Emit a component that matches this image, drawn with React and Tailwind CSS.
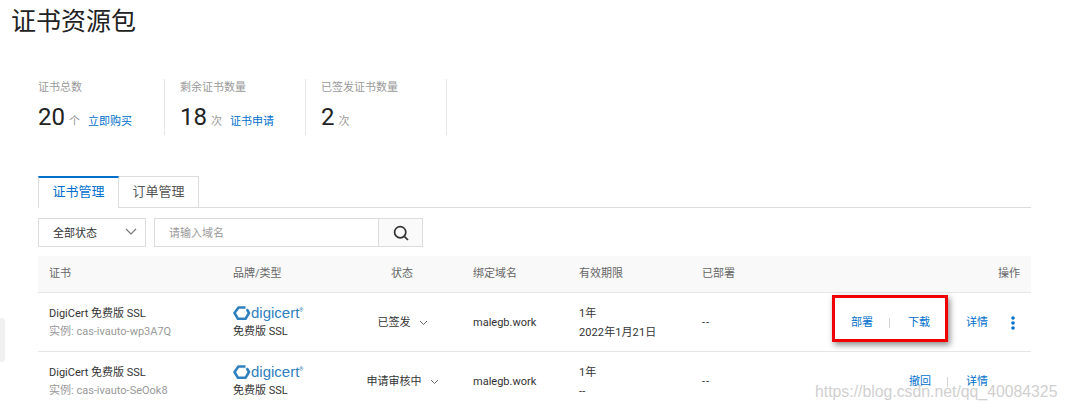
import React from "react";

const FONT = "font-['Roboto','Noto_Sans_CJK_SC',sans-serif]";
const GRID = "grid grid-cols-[184px_118px_122px_106px_123px_100px_240px]";

function Stat({ label, value, unit, link, first }) {
  return (
    <div className={`h-[56px] border-r border-[#e6e6e6] ${first ? "w-[127px]" : "w-[141px] pl-[15px]"}`}>
      <div className="text-[11px] leading-[18px] text-[#9a9a9a]">{label}</div>
      <div className="flex items-baseline mt-[5px] h-[30px]">
        <span className="text-[24px] leading-[30px] text-[#222]">{value}</span>
        <span className="text-[11px] text-[#999] ml-[4px]">{unit}</span>
        {link && <a className="text-[11px] text-[#0070cc] ml-[8px]">{link}</a>}
      </div>
    </div>
  );
}

function Digicert() {
  return (
    <div className="flex items-center h-[14px] text-[#2f80bf]">
      <svg width="18" height="16" viewBox="0 0 18 16" fill="none" className="shrink-0">
        <path d="M12.5 2.5 H5.5 L1.5 8 L5 13.8 H12.5 L16 8 L13.8 4.2" stroke="#2f80bf" strokeWidth="2.6" strokeLinejoin="round" />
      </svg>
      <span className="font-['Liberation_Sans',sans-serif] text-[15px] leading-[18px]">digicert</span>
      <span className="self-start text-[5px] leading-[8px]">®</span>
    </div>
  );
}

function Row({ instance, status, date, children }) {
  return (
    <div className={`${GRID} relative h-[59px] pt-[2px] border-t border-[#e6e6e6] items-center text-[11px] text-[#333]`}>
      <div className="pl-[11px]">
        <div className="leading-[18px]">DigiCert 免费版 SSL</div>
        <div className="leading-[18px] text-[#999]">实例: {instance}</div>
      </div>
      <div className="pl-[11px]">
        <Digicert />
        <div className="mt-[4px] leading-[16px]">免费版 SSL</div>
      </div>
      <div className="flex items-center justify-center gap-[8px] pl-[3px]">
        <span>{status}</span>
        <svg width="9" height="6" viewBox="0 0 9 6" fill="none" stroke="#666" strokeWidth="1">
          <path d="M1 1l3.5 3.5L8 1" />
        </svg>
      </div>
      <div className="pl-[11px]">malegb.work</div>
      <div className="pl-[11px]">
        <div className="leading-[19px]">1年</div>
        <div className="leading-[19px] tracking-[0.1px]">{date}</div>
      </div>
      <div className="pl-[11px] tracking-[1px]">--</div>
      {children}
    </div>
  );
}

function Sep() {
  return <span className="w-px h-[10px] bg-[#d4d4d4]" />;
}

export default function App() {
  return (
    <div className={`${FONT} relative h-[410px] w-[1066px] overflow-hidden bg-white`}>
      <h1 className="pl-[11px] pt-[5px] h-[40px] text-[25px] leading-[34px] text-[#222]">证书资源包</h1>

      <div className="flex ml-[38px] mt-[39px]">
        <Stat first label="证书总数" value="20" unit="个" link="立即购买" />
        <Stat label="剩余证书数量" value="18" unit="次" link="证书申请" />
        <Stat label="已签发证书数量" value="2" unit="次" />
      </div>

      <div className="ml-[38px] mt-[41px] w-[993px]">
        <div className="flex h-[32px] border-b border-[#dcdcdc]">
          <div className="w-[81px] h-[32px] border-x border-[#dcdcdc] border-t-2 border-t-[#0070cc] bg-white text-[13px] leading-[28px] text-center text-[#0070cc]">证书管理</div>
          <div className="w-[80px] h-[31px] border-r border-t border-[#dcdcdc] text-[13px] leading-[29px] text-center text-[#555]">订单管理</div>
        </div>

        <div className="flex mt-[10px] gap-[8px] h-[29px]">
          <div className="w-[108px] border border-[#dcdcdc] flex items-center justify-between pl-[14px] pr-[8px] text-[11px] text-[#333]">
            <span className="pt-[3px]">全部状态</span>
            <svg width="12" height="7" viewBox="0 0 12 7" fill="none" stroke="#777" strokeWidth="1.2" className="mb-[2px]">
              <path d="M1 1l5 5 5-5" />
            </svg>
          </div>
          <div className="w-[269px] border border-[#dcdcdc] flex">
            <div className="flex-1 pl-[14px] pt-[3px] flex items-center text-[11px] text-[#999]">请输入域名</div>
            <div className="w-[44px] border-l border-[#dcdcdc] bg-[#fafafa] flex items-center justify-center">
              <svg width="16" height="16" viewBox="0 0 16 16" fill="none" stroke="#333" strokeWidth="1.7">
                <circle cx="7.2" cy="7.2" r="5.6" />
                <path d="M11.3 11.3L15 15" />
              </svg>
            </div>
          </div>
        </div>

        <div className={`${GRID} mt-[9px] h-[36px] bg-[#f9f9f9] items-center text-[11px] text-[#666]`}>
          <div className="pl-[11px]">证书</div>
          <div className="pl-[11px]">品牌/类型</div>
          <div className="text-center pl-[2px]">状态</div>
          <div className="pl-[11px]">绑定域名</div>
          <div className="pl-[11px]">有效期限</div>
          <div className="pl-[11px]">已部署</div>
          <div className="text-right pr-[11px]">操作</div>
        </div>

        <Row instance="cas-ivauto-wp3A7Q" status="已签发" date="2022年1月21日">
          <div className="flex items-center justify-end text-[#0070cc]">
            <a className="mr-[16px]">部署</a>
            <Sep />
            <a className="ml-[18px] mr-[36px]">下载</a>
            <a className="mr-[23px]">详情</a>
            <svg width="4" height="14" viewBox="0 0 4 14" fill="#0070cc" className="mr-[16px]">
              <circle cx="2" cy="2" r="1.8" />
              <circle cx="2" cy="7" r="1.8" />
              <circle cx="2" cy="12" r="1.8" />
            </svg>
          </div>
          <div className="absolute left-[794px] top-[2px] w-[116px] h-[47px] border-[3px] border-[#f00000] shadow-[2px_3px_6px_rgba(0,0,0,0.45)]" />
        </Row>
        <Row instance="cas-ivauto-SeOok8" status="申请审核中" date="--">
          <div className="flex items-center justify-end text-[#0070cc]">
            <a className="mr-[16px]">撤回</a>
            <Sep />
            <a className="ml-[18px] mr-[43px]">详情</a>
          </div>
        </Row>
      </div>

      <div className="absolute left-0 top-[318px] w-[5px] h-[44px] bg-[#f0f0f0] rounded-r-[3px]" />
      <div className="absolute left-[815px] top-[381px] font-['Liberation_Sans',sans-serif] text-[15.8px] leading-[22px] text-[#d0d0d0] whitespace-nowrap">https://blog.csdn.net/qq_40084325</div>
    </div>
  );
}
